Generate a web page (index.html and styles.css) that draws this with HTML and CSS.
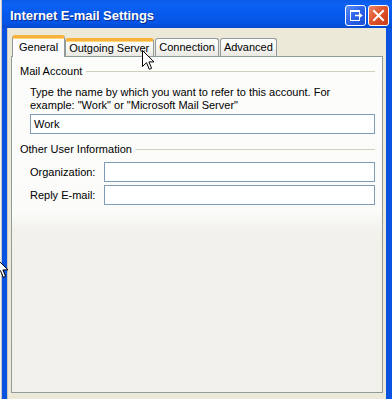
FILE: index.html
```html
<!DOCTYPE html>
<html>
<head>
<meta charset="utf-8">
<link rel="stylesheet" href="styles.css">
</head>
<body>
<div class="screen">
  <div class="behind"></div>
  <div class="window">
    <div class="titlebar">
      <span class="title">Internet E-mail Settings</span>
      <div class="tbtns">
        <span class="tbtn restore">
          <svg width="21" height="21" viewBox="0 0 21 21">
            <rect x="5.5" y="5.5" width="9" height="10" fill="none" stroke="#fff" stroke-width="1"/>
            <rect x="5" y="5" width="10" height="2" fill="#fff"/>
            <path d="M10 10.5 H16 M14 8.5 L16.5 10.5 L14 12.5" fill="none" stroke="#fff" stroke-width="1.6"/>
          </svg>
        </span>
        <span class="tbtn close">
          <svg width="21" height="21" viewBox="0 0 21 21">
            <path d="M6 6 L15 15 M15 6 L6 15" stroke="#fff" stroke-width="2" stroke-linecap="square"/>
          </svg>
        </span>
      </div>
    </div>
    <div class="frame">
      <div class="tabs">
        <div class="tab active">General</div>
        <div class="tab hot">Outgoing Server</div>
        <div class="tab">Connection</div>
        <div class="tab">Advanced</div>
      </div>
      <div class="panel">
        <div class="group"><span>Mail Account</span><i></i></div>
        <p class="desc">Type the name by which you want to refer to this account. For<br>example: "Work" or "Microsoft Mail Server"</p>
        <div class="input wide">Work</div>
        <div class="group second"><span>Other User Information</span><i></i></div>
        <div class="row"><span class="label">Organization:</span><div class="input"></div></div>
        <div class="row"><span class="label">Reply E-mail:</span><div class="input"></div></div>
      </div>
    </div>
  </div>
  <svg class="cursor c1" width="13" height="21" viewBox="0 0 13 21">
    <path d="M0.5 0.5 L0.5 16.5 L4.5 12.7 L7.3 19.3 L9.6 18.3 L6.9 11.9 L12 11.9 Z" fill="#fff" stroke="#000" stroke-width="1" stroke-linejoin="miter"/>
  </svg>
  <svg class="cursor c2" width="13" height="21" viewBox="0 0 13 21">
    <path d="M0.5 0.5 L0.5 16.5 L4.5 12.7 L7.3 19.3 L9.6 18.3 L6.9 11.9 L12 11.9 Z" fill="#fff" stroke="#000" stroke-width="1" stroke-linejoin="miter"/>
  </svg>
</div>
</body>
</html>
```

FILE: styles.css
```css
* { box-sizing: border-box; }
html, body { margin: 0; padding: 0; }
body {
  width: 392px;
  height: 399px;
  overflow: hidden;
  background: #fff;
  font-family: "Liberation Sans", "DejaVu Sans", sans-serif;
  font-size: 11px;
  color: #000;
}
.screen {
  position: relative;
  display: flex;
  width: 392px;
  height: 399px;
  overflow: hidden;
}
.behind {
  width: 2px;
  background: #f4f4f4;
  border-right: 1px solid #c8c8c8;
}
.window {
  flex: 1;
  display: flex;
  flex-direction: column;
}
.titlebar {
  height: 28px;
  display: flex;
  align-items: center;
  justify-content: space-between;
  padding: 0 3px 0 8px;
  background: linear-gradient(to bottom, #0a5ae6 0%, #0d62f2 15%, #075aee 45%, #0455e6 80%, #0349cf 100%);
}
.title {
  color: #fff;
  font-family: "Liberation Sans", "DejaVu Sans", sans-serif;
  font-weight: bold;
  font-size: 13px;
  letter-spacing: -0.05px;
  margin-top: 2px;
  text-shadow: 1px 1px 0 #0a2c8c;
}
.tbtns {
  display: flex;
  gap: 2px;
  margin-top: 2px;
}
.tbtn {
  width: 21px;
  height: 21px;
  border: 1px solid #fff;
  border-radius: 3px;
  display: block;
}
.tbtn svg { display: block; margin: -1px; }
.restore { background: linear-gradient(135deg, #5a8cf6 0%, #2a62e8 50%, #1b4fd6 100%); }
.close { background: linear-gradient(135deg, #e9876a 0%, #e0552e 45%, #c83b14 100%); }
.frame {
  flex: 1;
  background: #ece9d8;
  border-left: 5px solid #0a52e0;
  border-right: 6px solid #0a52e0;
  box-shadow: inset 1px 0 0 #cfcbbb;
  padding: 7px 3px 0 4px;
  display: flex;
  flex-direction: column;
}
.tabs {
  display: flex;
  align-items: flex-end;
  padding-left: 1px;
  height: 21px;
  position: relative;
  z-index: 1;
}
.tab {
  height: 18px;
  padding: 0 3px 0 3px;
  margin-right: 1px;
  display: flex;
  align-items: center;
  border: 1px solid #919b9c;
  border-bottom: none;
  border-radius: 3px 3px 0 0;
  background: linear-gradient(to bottom, #fefefe 0%, #f6f6f3 50%, #e9e8e2 100%);
  white-space: nowrap;
  line-height: 13px;
}
.tab.hot, .tab.active {
  border-top: 3px solid #f9b33c;
  box-shadow: inset 0 1px 0 #ffd57a;
}
.tab.hot { padding-right: 4px; }
.tab.active {
  height: 22px;
  margin-bottom: -1px;
  background: #fcfcfe;
  padding: 0 6px;
  margin-right: 0;
}
.panel {
  flex: 1;
  margin-bottom: 6px;
  border: 1px solid #919b9c;
  background: linear-gradient(to bottom, #fcfcfb 0%, #fbfbf9 46%, #f2f1ec 52%, #f1f0eb 100%);
  padding: 8px 7px 0 8px;
}
.group {
  display: flex;
  align-items: center;
  height: 13px;
  line-height: 13px;
}
.group span { margin-right: 4px; white-space: nowrap; }
.group i {
  flex: 1;
  height: 1px;
  background: #d0d0bf;
}
.group.second { margin-top: 9px; }
.desc {
  margin: 8px 0 0 10px;
  line-height: 13px;
}
.input {
  height: 20px;
  border: 1px solid #7f9db9;
  background: #fff;
  line-height: 18px;
  padding-left: 3px;
}
.input.wide {
  margin: 2px 0 0 10px;
}
.row {
  display: flex;
  align-items: center;
  margin-left: 10px;
  margin-top: 3px;
}
.second + .row { margin-top: 6px; }
.row .label { width: 74px; }
.row .input { flex: 1; }
.cursor {
  position: absolute;
  z-index: 5;
}
.c1 { left: 142px; top: 50px; }
.c2 { left: -4px; top: 258px; }
```
